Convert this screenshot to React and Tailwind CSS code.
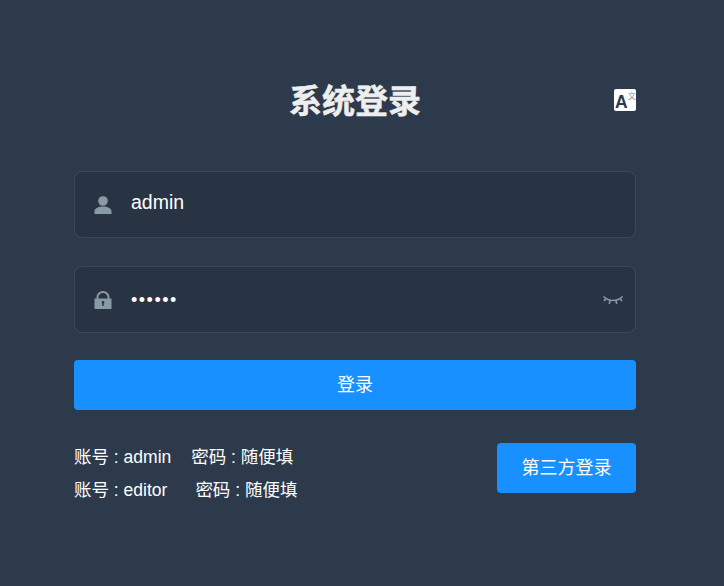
import React from "react";

function Lang() {
  return (
    <svg viewBox="0 0 22 22" className="w-[22px] h-[22px]">
      <rect width="22" height="22" rx="2" fill="#fff" />
      <text x="1" y="19" fontFamily="Liberation Sans" fontWeight="700" fontSize="17.500" fill="#2d3a4b">A</text>
      <text x="13.800" y="10" fontFamily="Noto Sans CJK SC" fontSize="8.200" fill="#8a939e">文</text>
    </svg>
  );
}

function User() {
  return (
    <svg viewBox="0 0 18 18" className="w-[18px] h-[18px]" fill="#889aa4">
      <circle cx="9" cy="5" r="4.800" />
      <path d="M0.500 18v-2.600C0.500 12.200 4.600 10.400 9 10.400s8.500 1.800 8.500 5V18z" />
    </svg>
  );
}

function Lock() {
  return (
    <svg viewBox="0 0 18 18" className="w-[18px] h-[18px]">
      <path d="M3.500 8V6a5.500 5 0 0 1 11 0v2" fill="none" stroke="#889aa4" strokeWidth="2" />
      <path fillRule="evenodd" fill="#889aa4" d="M0.500 7.500h17V18H0.500z M9 10a1.400 1.400 0 0 0-.7 2.600V15h1.400v-2.400A1.400 1.400 0 0 0 9 10z" />
    </svg>
  );
}

function Eye() {
  return (
    <svg viewBox="0 0 22 12" className="w-[22px] h-[12px]" fill="none" stroke="#889aa4" strokeWidth="1.600">
      <path d="M1.500 1.500c2.800 2.800 5.700 4 9.500 4s6.700-1.200 9.500-4" />
      <path d="M4 3.500L2 6M18 3.500l2 2.500M8 5.500l-.7 3.500M14 5.500l.7 3.500" />
    </svg>
  );
}

function Field({ icon, children, right }) {
  return (
    <div className="flex items-center h-[67px] pl-[18.500px] bg-[#283443] border border-[rgba(255,255,255,0.1)] rounded-[8px]">
      <span className="w-[18px] flex justify-center">{icon}</span>
      <span className="ml-[19.500px] flex-1 text-[19.500px] text-white leading-[28px] mt-[-6px]">{children}</span>
      {right}
    </div>
  );
}

export default function App() {
  return (
    <div className="min-h-[586px] bg-[#2d3a4b] pl-[74px] pr-[88px] pt-[80px] font-['Liberation_Sans','Noto_Sans_CJK_SC',sans-serif]">
      <div className="relative h-[43px] flex items-center justify-center mb-[48px]">
        <h3 className="text-[33px] font-bold text-[#eeeeee] leading-[43px] [-webkit-text-stroke:0.5px_#eeeeee]">系统登录</h3>
        <span className="absolute right-0 top-[9px] flex">
          <Lang />
        </span>
      </div>
      <Field icon={<User />}>admin</Field>
      <div className="mt-[28px]">
        <Field
          icon={<Lock />}
          right={
            <span className="mr-[11px] mt-[2px] flex">
              <Eye />
            </span>
          }
        >
          <span className="text-[18px] tracking-[1.500px] relative top-[3px]">••••••</span>
        </Field>
      </div>
      <button className="mt-[27px] w-full h-[50px] rounded-[4px] bg-[#1890ff] text-white text-[18px] block">登录</button>
      <div className="mt-[33px] flex justify-between">
        <div className="text-[17.500px] text-white leading-[33px] mt-[-2px]">
          <div>账号 : admin<span className="ml-[20px]">密码 : 随便填</span></div>
          <div>账号 : editor<span className="ml-[28px]">密码 : 随便填</span></div>
        </div>
        <button className="w-[139px] h-[50px] rounded-[4px] bg-[#1890ff] text-white text-[18px]">第三方登录</button>
      </div>
    </div>
  );
}
